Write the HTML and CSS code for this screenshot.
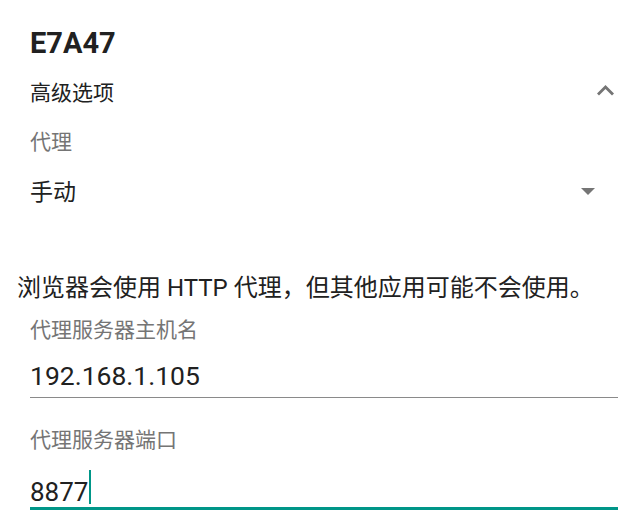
FILE: index.html
```html
<!DOCTYPE html>
<html lang="zh-CN">
<head>
<meta charset="utf-8">
<title>E7A47</title>
<link rel="stylesheet" href="styles.css">
</head>
<body>
<main class="page">
  <h1 class="title">E7A47</h1>
  <div class="row adv">
    <span class="row-text">高级选项</span>
    <svg class="chevron" width="17" height="10.5" viewBox="6 8 12 7.41" preserveAspectRatio="none" aria-hidden="true">
      <path d="M12 8l-6 6 1.41 1.41L12 10.83l4.59 4.58L18 14z" fill="#757575"/>
    </svg>
  </div>
  <div class="label label-proxy">代理</div>
  <div class="row select">
    <span class="select-text">手动</span>
    <span class="caret" aria-hidden="true"></span>
  </div>
  <p class="note">浏览器会使用 HTTP 代理，但其他应用可能不会使用。</p>
  <div class="label label-host">代理服务器主机名</div>
  <div class="field">192.168.1.105</div>
  <div class="label label-port">代理服务器端口</div>
  <div class="field field-focus">8877<span class="cursor"></span></div>
</main>
</body>
</html>
```
FILE: styles.css
```css
html, body {
  margin: 0;
  padding: 0;
  background: #ffffff;
}
body {
  font-family: Roboto, "Noto Sans CJK SC", sans-serif;
  color: #212121;
  width: 641px;
  height: 513px;
  overflow: hidden;
}
.page {
  padding: 25px 23px 0 30px;
  display: flex;
  flex-direction: column;
}
.title {
  margin: 0;
  font-size: 29px;
  font-weight: 700;
  line-height: 36px;
  height: 36px;
  color: #212121;
}
.row {
  display: flex;
  align-items: flex-start;
  justify-content: space-between;
}
.adv {
  margin-top: 14px;
  height: 36px;
}
.row-text {
  font-size: 21px;
  line-height: 36px;
}
.chevron {
  display: block;
  margin-top: 10px;
  margin-right: 4px;
}
.label {
  font-size: 21px;
  line-height: 28px;
  height: 28px;
  color: #757575;
}
.label-proxy {
  margin-top: 17px;
}
.select {
  margin-top: 19px;
  height: 36px;
}
.select-text {
  font-size: 23px;
  line-height: 36px;
}
.caret {
  display: block;
  width: 0;
  height: 0;
  margin-top: 13px;
  margin-right: 23px;
  border-left: 7px solid transparent;
  border-right: 7px solid transparent;
  border-top: 7px solid #757575;
}
.note {
  margin: 61px 0 0 -13px;
  font-size: 24px;
  line-height: 32px;
  height: 32px;
  white-space: nowrap;
  color: #212121;
}
.label-host {
  margin-top: 12px;
}
.field {
  margin-top: 14px;
  font-size: 26.5px;
  line-height: 36px;
  height: 39px;
  border-bottom: 1px solid #8a8a8a;
  color: #212121;
}
.label-port {
  margin-top: 28px;
}
.field-focus {
  margin-top: 16px;
  font-size: 26px;
  height: 37px;
  line-height: 34px;
  border-bottom: 3px solid #009688;
}
.cursor {
  display: inline-block;
  width: 2px;
  height: 34px;
  margin-left: 1px;
  vertical-align: -3px;
  background: #009688;
}
```
